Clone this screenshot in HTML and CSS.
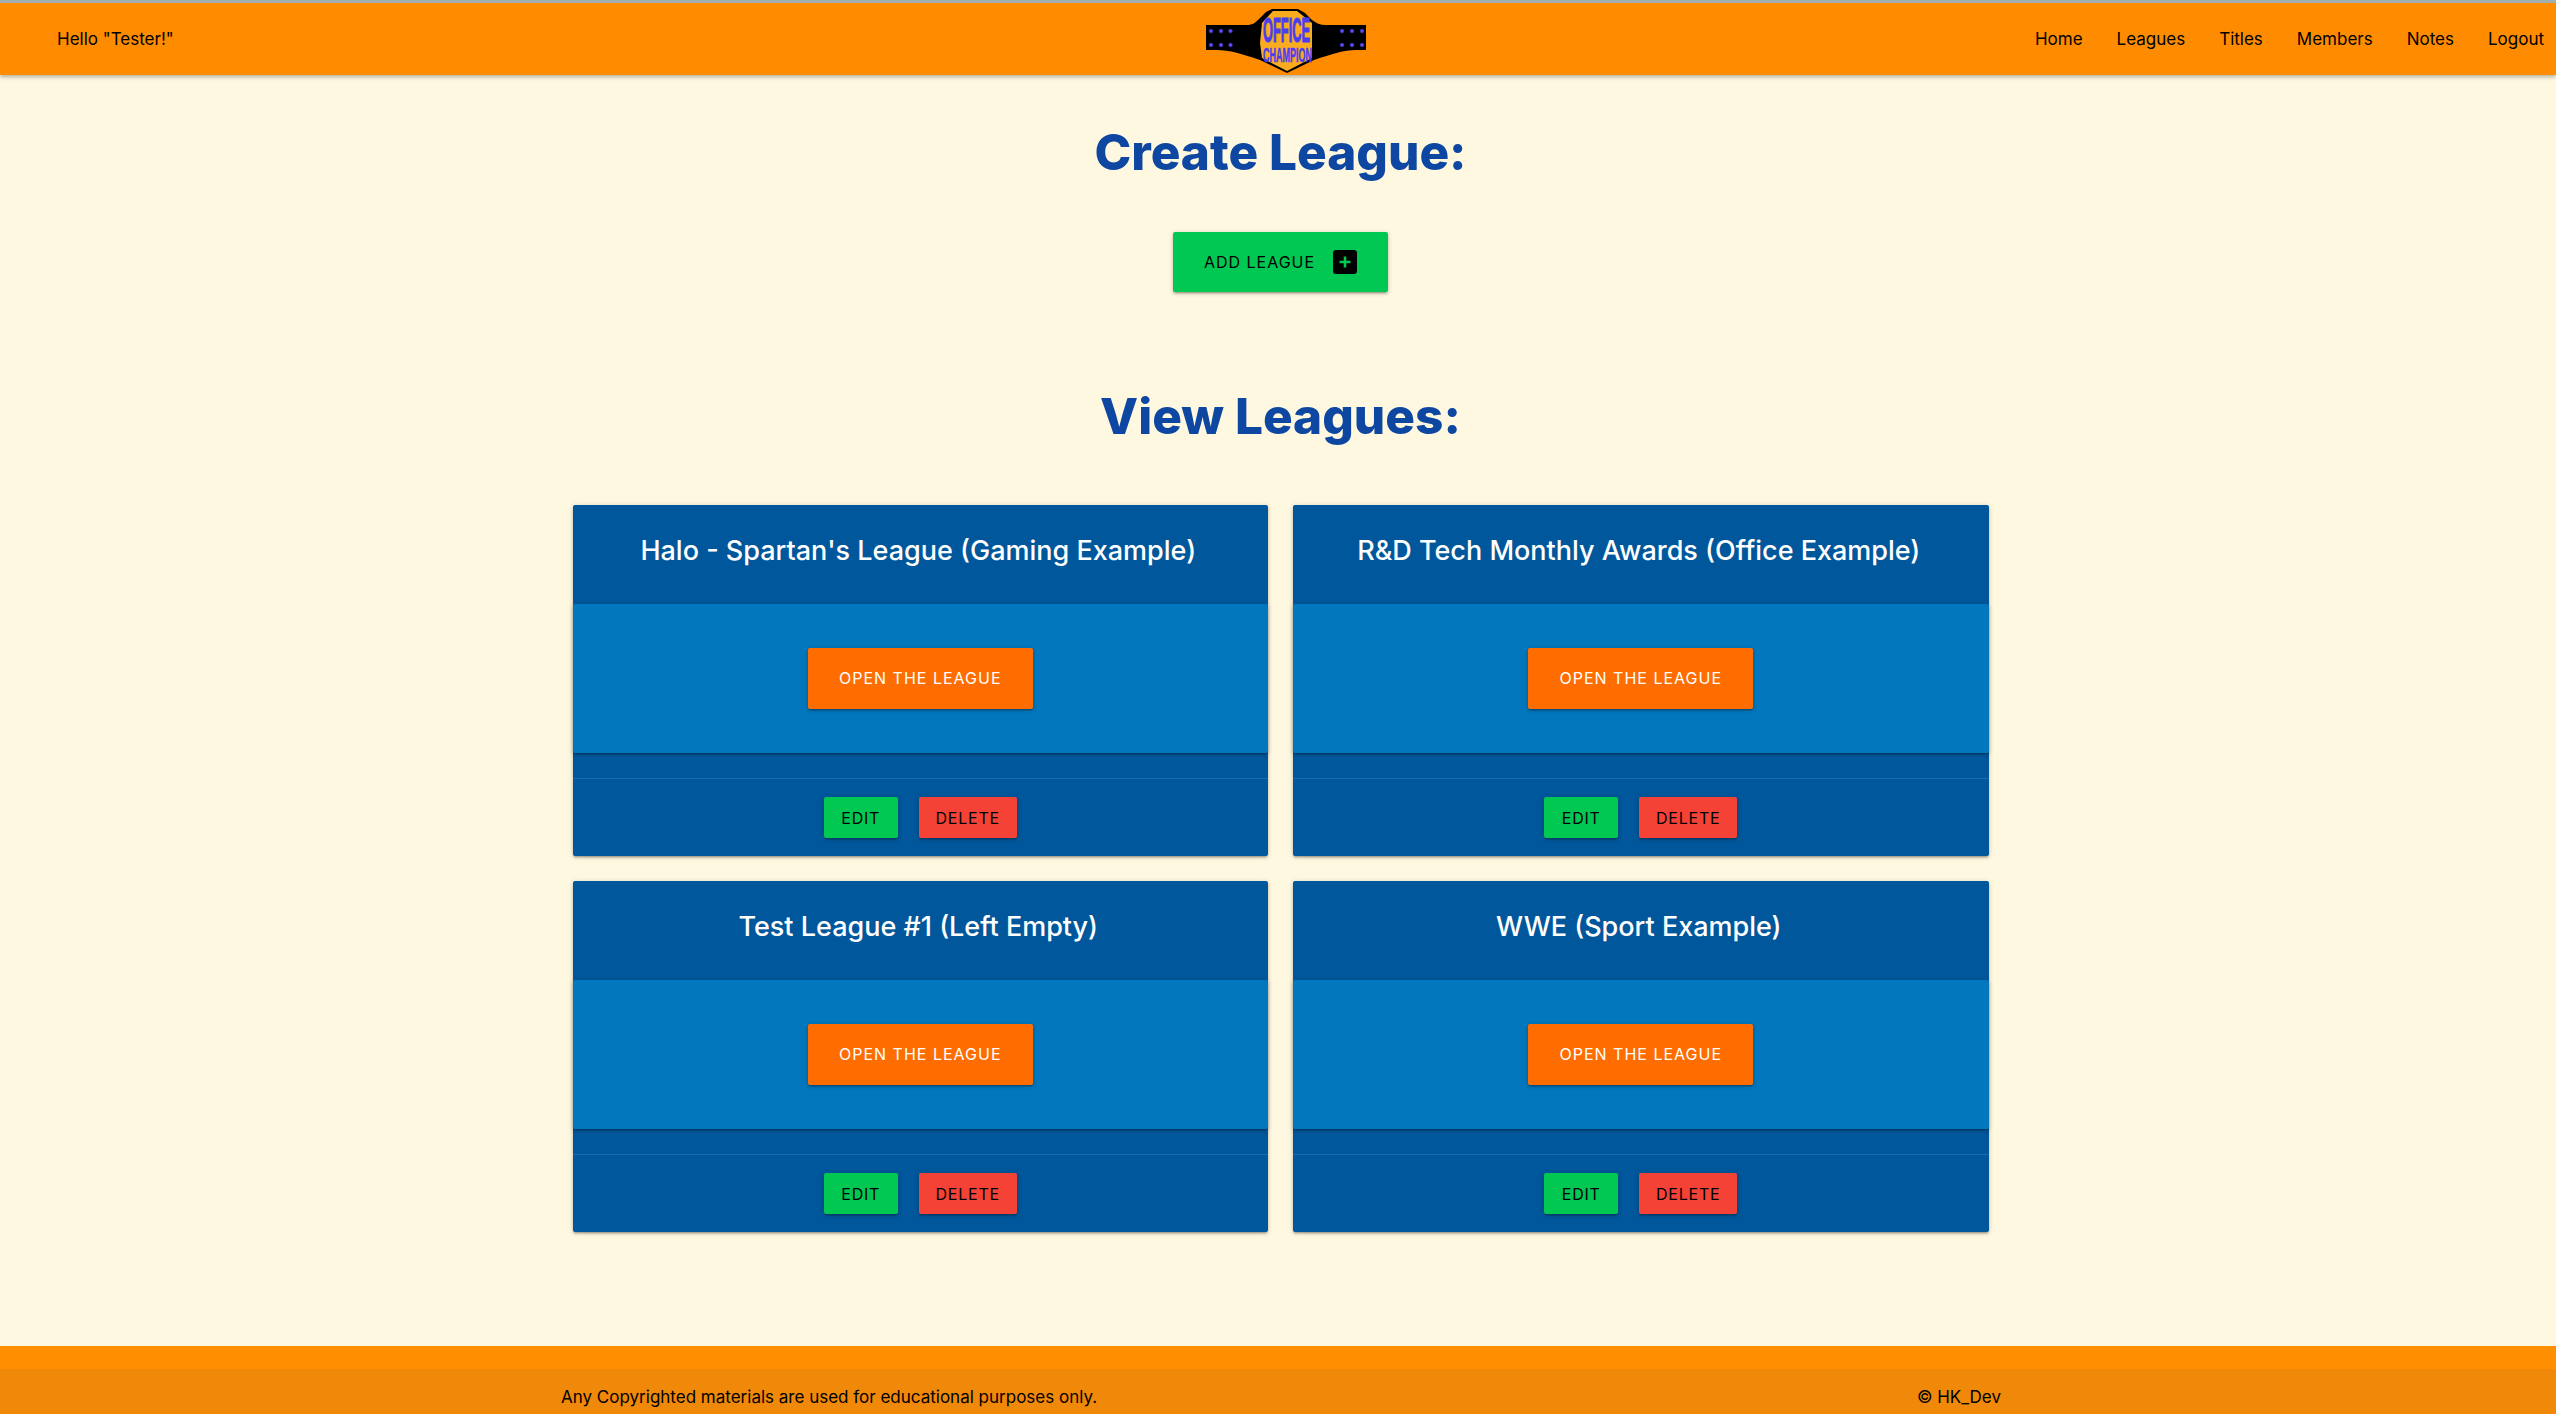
FILE: index.html
```html
<!DOCTYPE html>
<html lang="en">
<head>
<meta charset="utf-8">
<title>Office Champion</title>
<link rel="stylesheet" href="styles.css">
</head>
<body>
<nav class="topbar">
  <span class="hello">Hello "Tester!"</span>
  <svg class="logo" viewBox="0 0 160 64" width="160" height="64" aria-label="Office Champion">
    <path d="M0 16H40C46 16 49 14 52 11L60 3L66 0H92L99 4L106 11C110 14 114 16 120 16H160V41H150C138 41 126 45 108 51L81 64L54 51C36 45 24 41 10 41H0Z" fill="#000"/>
    <path d="M56 14L67 2H91L106 14V49L81 62L56 49L54 34Z" fill="#f9ac1d"/>
    <g class="logo-dots">
      <circle cx="5" cy="22" r="2"/><circle cx="15" cy="22" r="2"/><circle cx="24.500" cy="22" r="2"/>
      <circle cx="5" cy="36" r="2"/><circle cx="15" cy="36" r="2"/><circle cx="24.500" cy="36" r="2"/>
      <circle cx="136" cy="22" r="2"/><circle cx="146" cy="22" r="2"/><circle cx="156" cy="22" r="2"/>
      <circle cx="136" cy="36" r="2"/><circle cx="146" cy="36" r="2"/><circle cx="156" cy="36" r="2"/>
    </g>
    <text class="logo-big" transform="translate(57 33) scale(.367 1)">OFFICE</text>
    <text class="logo-small" transform="translate(57 53) scale(.43 1)">CHAMPION</text>
  </svg>
  <ul class="menu">
    <li>Home</li><li>Leagues</li><li>Titles</li><li>Members</li><li>Notes</li><li>Logout</li>
  </ul>
</nav>
<main class="page">
  <h2 class="title">Create League:</h2>
  <a class="btn btn-add">ADD LEAGUE
    <svg class="plus" viewBox="0 0 24 24" width="24" height="24"><rect width="24" height="24" rx="3" fill="#000"/><path d="M12 6.500V17.500M6.500 12H17.500" stroke="#00c853" stroke-width="2.600"/></svg>
  </a>
  <h2 class="title title-view">View Leagues:</h2>
  <section class="cards">
    <article class="card">
      <h3 class="card-title">Halo - Spartan's League (Gaming Example)</h3>
      <div class="card-body"><a class="btn btn-open">OPEN THE LEAGUE</a></div>
      <div class="card-actions"><a class="btn btn-small btn-edit">EDIT</a><a class="btn btn-small btn-delete">DELETE</a></div>
    </article>
    <article class="card">
      <h3 class="card-title">R&amp;D Tech Monthly Awards (Office Example)</h3>
      <div class="card-body"><a class="btn btn-open">OPEN THE LEAGUE</a></div>
      <div class="card-actions"><a class="btn btn-small btn-edit">EDIT</a><a class="btn btn-small btn-delete">DELETE</a></div>
    </article>
    <article class="card">
      <h3 class="card-title">Test League #1 (Left Empty)</h3>
      <div class="card-body"><a class="btn btn-open">OPEN THE LEAGUE</a></div>
      <div class="card-actions"><a class="btn btn-small btn-edit">EDIT</a><a class="btn btn-small btn-delete">DELETE</a></div>
    </article>
    <article class="card">
      <h3 class="card-title">WWE (Sport Example)</h3>
      <div class="card-body"><a class="btn btn-open">OPEN THE LEAGUE</a></div>
      <div class="card-actions"><a class="btn btn-small btn-edit">EDIT</a><a class="btn btn-small btn-delete">DELETE</a></div>
    </article>
  </section>
</main>
<footer class="footer">
  <div class="footer-band">
    <span>Any Copyrighted materials are used for educational purposes only.</span>
    <span>© HK_Dev</span>
  </div>
</footer>
</body>
</html>
```
FILE: styles.css
```css
* { box-sizing: border-box; }
html, body { margin: 0; height: 100%; }
body {
  height: 1414px;
  overflow: hidden;
  display: flex;
  flex-direction: column;
  background: #fff8e1;
  font-family: Inter, "Noto Sans", sans-serif;
  color: #000;
}
.topbar {
  flex: none;
  height: 75px;
  border-top: 3px solid #a0aeae;
  background: #ff8c00;
  box-shadow: 0 2px 4px rgba(0,0,0,.3);
  display: grid;
  grid-template-columns: 1206px 160px 1fr;
  align-items: center;
  font-size: 17px;
  position: relative;
  z-index: 2;
}
.hello { padding-left: 57px; }
.logo { display: block; margin-top: 4px; }
.logo-dots { fill: #5a4df5; stroke: #2a2280; stroke-width: .5; }
.logo-big { font: 700 35px "Liberation Sans", sans-serif; fill: #4a3df0; stroke: #4a3df0; stroke-width: 1.2; }
.logo-small { font: 700 21px "Liberation Sans", sans-serif; fill: #4a3df0; stroke: #4a3df0; stroke-width: .5; }
.menu {
  list-style: none;
  margin: 0;
  padding: 0 12px 0 0;
  display: flex;
  justify-content: flex-end;
  gap: 34px;
}
.page {
  flex: 1;
  padding: 47px 0 0 5px;
  display: flex;
  flex-direction: column;
  align-items: center;
}
.title {
  margin: 0;
  font-size: 49.500px;
  line-height: 60px;
  font-weight: 800;
  color: #0d47a1;
}
.title-view { margin-top: 94px; }
.btn {
  display: inline-flex;
  align-items: center;
  justify-content: center;
  border-radius: 2px;
  font-size: 16px;
  letter-spacing: 1px;
  box-shadow: 0 2px 2px rgba(0,0,0,.14), 0 3px 1px -2px rgba(0,0,0,.12), 0 1px 5px rgba(0,0,0,.2);
}
.btn-add {
  margin-top: 50px;
  width: 215px;
  height: 60px;
  gap: 18px;
  background: #00c853;
}
.plus { display: block; }
.cards {
  margin-top: 59px;
  width: 1416px;
  display: grid;
  grid-template-columns: 1fr 1fr;
  gap: 25px;
}
.card {
  border-radius: 2px;
  background: #01579b;
  box-shadow: 0 2px 2px rgba(0,0,0,.14), 0 3px 1px -2px rgba(0,0,0,.12), 0 1px 5px rgba(0,0,0,.2);
  display: flex;
  flex-direction: column;
}
.card-title {
  margin: 0;
  height: 99px;
  padding: 26px 4px 0 0;
  text-align: center;
  font-size: 27px;
  line-height: 40px;
  font-weight: 500;
  color: #fff;
}
.card-body {
  height: 149px;
  background: #0277bd;
  border-radius: 2px;
  box-shadow: 0 2px 2px rgba(0,0,0,.14), 0 3px 1px -2px rgba(0,0,0,.12), 0 1px 5px rgba(0,0,0,.2);
  display: flex;
  align-items: center;
  justify-content: center;
}
.btn-open {
  width: 225px;
  height: 61px;
  padding-bottom: 1px;
  background: #ff6d00;
  color: #fff;
}
.card-actions {
  margin-top: 25px;
  height: 78px;
  border-top: 1px solid rgba(255,255,255,.12);
  display: flex;
  align-items: center;
  justify-content: center;
  gap: 21px;
}
.btn-small { height: 41px; letter-spacing: .8px; }
.btn-edit { width: 74px; background: #00c853; }
.btn-delete { width: 98px; background: #f44336; }
.footer {
  flex: none;
  height: 68px;
  padding-top: 23px;
  background: #ff8f00;
}
.footer-band {
  height: 45px;
  padding: 18px 555px 0 561px;
  background: #f0880a;
  display: flex;
  justify-content: space-between;
  font-size: 17px;
  line-height: 20px;
}
```
